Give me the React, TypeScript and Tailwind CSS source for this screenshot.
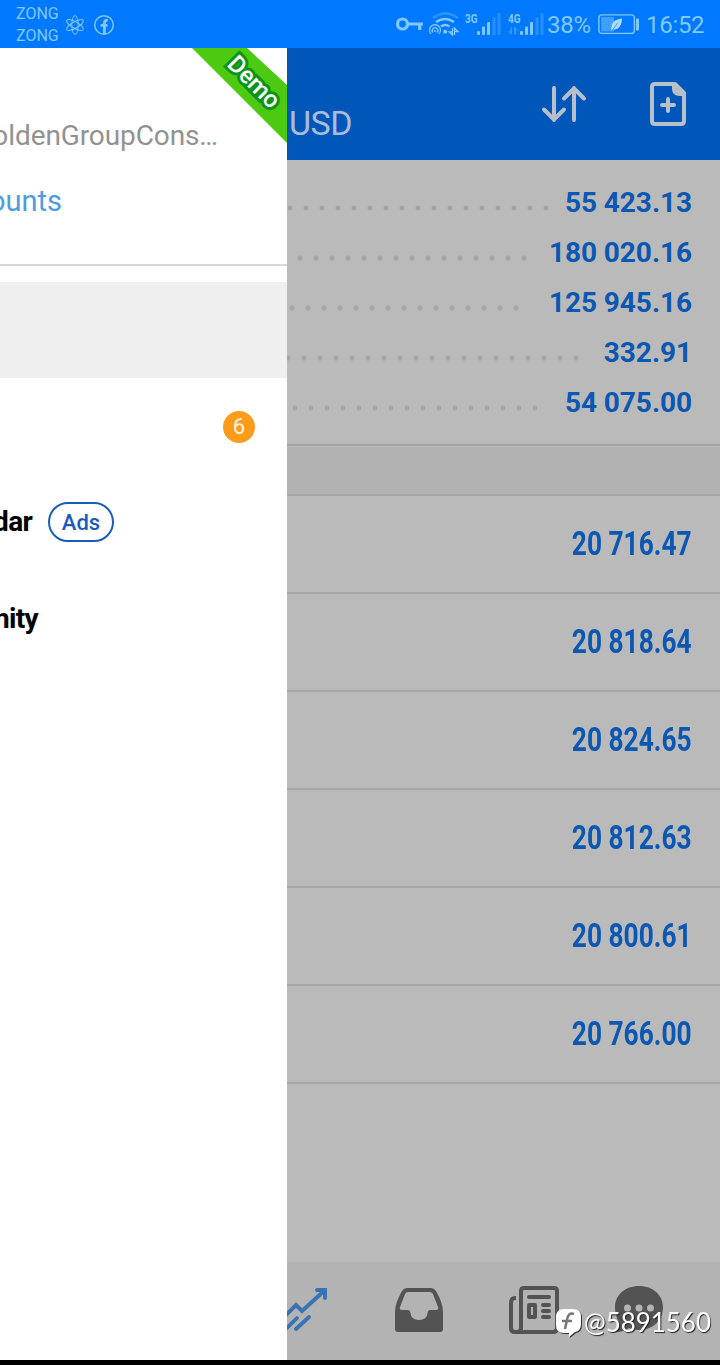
const summary = [
  { value: "55 423.13", dots: "w-[267px]" },
  { value: "180 020.16", dots: "w-[245px]" },
  { value: "125 945.16", dots: "w-[237px]" },
  { value: "332.91", dots: "w-[297px]" },
  { value: "54 075.00", dots: "w-[256px]" },
];

const prices = ["20 716.47", "20 818.64", "20 824.65", "20 812.63", "20 800.61", "20 766.00"];

function Signal({ label, arrows }: { label: string; arrows?: boolean }) {
  return (
    <svg className="h-[48px] w-[36px]" viewBox="0 0 36 48" fill="#80c8ff">
      <text x="0" y="23" fontSize="13" fontWeight="700" textLength="12.5" lengthAdjust="spacingAndGlyphs" fontFamily="Roboto">
        {label}
      </text>
      {arrows && <path opacity=".4" d="M3 27v8l-3-3.500h2zM7 27l3 3.500h-2v4h-1.500zM3 27h1v7h-1zM6 27h1v7h-1z" />}
      <rect x="12" y="31" width="3" height="4" rx="1" />
      <rect x="17" y="26.500" width="3" height="8.500" rx="1" />
      <rect x="22" y="22" width="3" height="13" rx="1" />
      <rect x="27.500" y="17.500" width="3" height="17.500" rx="1" opacity=".3" />
      <rect x="32.500" y="13" width="3" height="22" rx="1" opacity=".3" />
    </svg>
  );
}

function StatusBar() {
  return (
    <header className="flex h-[48px] items-center bg-[#0079ff] text-[#80c8ff]">
      <div className="ml-[16px] mt-px w-[49px] text-[16px] leading-[22px]">
        <div>ZONG</div>
        <div>ZONG</div>
      </div>
      <svg className="mt-[2px] h-[22px] w-[20px]" viewBox="0 0 20 22" fill="none" stroke="#80c8ff" strokeWidth="1">
        <ellipse cx="10" cy="11" rx="3.200" ry="9.500" />
        <ellipse cx="10" cy="11" rx="3.200" ry="9.500" transform="rotate(60 10 11)" />
        <ellipse cx="10" cy="11" rx="3.200" ry="9.500" transform="rotate(120 10 11)" />
      </svg>
      <svg className="ml-[8px] mt-[2px] h-[22px] w-[22px]" viewBox="0 0 22 22" fill="none" stroke="#80c8ff">
        <circle cx="11" cy="11" r="9.300" strokeWidth="1.500" />
        <path d="M11.400 20V8.800Q11.400 6 14.800 6.300M7.500 11.300H14.500" strokeWidth="2.800" />
      </svg>
      <svg className="ml-[280px] h-[48px] w-[30px]" viewBox="0 0 30 48" fill="none" stroke="#80c8ff">
        <circle cx="7.500" cy="24" r="5" strokeWidth="3.200" />
        <path d="M13 24H28M24.700 24V30" strokeWidth="3.200" />
      </svg>
      <svg className="ml-[3px] h-[48px] w-[32px]" viewBox="0 0 32 48" fill="none" stroke="#80c8ff" strokeWidth="2">
        <path opacity=".35" d="M5 18Q17 9 30 18" strokeWidth="2.500" />
        <path d="M8 22Q17 16 26 22M13 26.500Q17 23.500 21.500 26.500" strokeWidth="2.500" />
        <circle cx="17.200" cy="31.800" r="2" fill="#80c8ff" stroke="none" />
        <path d="M3 34A5.500 5.500 0 1 1 11 34M5 32.500A2.800 2.800 0 1 1 9 32.500" strokeWidth="1.300" />
        <circle cx="7" cy="31" r="1" fill="#80c8ff" stroke="none" />
        <path d="M24.500 28V35L21 31.800H24M26.500 35V28L30 31.500H27" strokeWidth="1.300" />
      </svg>
      <div className="ml-[5px] flex">
        <Signal label="3G" />
      </div>
      <div className="ml-[7px] flex">
        <Signal label="4G" arrows />
      </div>
      <span className="ml-[3px] mt-[2px] w-[51px] text-[24px] tracking-[-0.3px]">38%</span>
      <svg className="h-[24px] w-[42px]" viewBox="0 0 42 24" fill="none">
        <rect x="0.900" y="2.900" width="35.500" height="18.500" rx="3" stroke="#80c8ff" strokeWidth="1.400" />
        <rect x="3" y="5" width="13" height="14.500" fill="#3f9eff" />
        <path d="M13.500 19C12 10 18 7 24 6.500C24 13 21 18 15 17.500L13.500 19Z" fill="#a8dcff" />
        <path d="M14 18.500L20 10.500" stroke="#3093ff" strokeWidth=".8" />
        <rect x="38" y="6.500" width="3" height="12" rx="1" fill="#80c8ff" />
      </svg>
      <span className="ml-[6px] mt-[2px] text-[24px] tracking-[-0.3px]">16:52</span>
    </header>
  );
}

function Drawer() {
  return (
    <aside className="relative h-[1312px] w-[287px] flex-none overflow-hidden bg-white">
      <div className="flex h-[218px] flex-col border-b-2 border-[#d7d7d7]">
        <div className="mt-[71px] flex h-[34px] w-[218px] items-center justify-end whitespace-nowrap text-[28px] tracking-[-0.1px] text-[#929292]">
          oldenGroupCons…
        </div>
        <div className="mt-[31px] flex h-[36px] w-[62px] items-center justify-end whitespace-nowrap text-[29px] text-[#4d9de0]">
          ounts
        </div>
      </div>
      <div className="mt-[16px] h-[96px] bg-[#efefef]" />
      <div className="flex h-[97px] items-center justify-end pr-[32px]">
        <div className="flex h-[32px] w-[32px] items-center justify-center rounded-full bg-[#fd9c1c] text-[22px] leading-none text-[#fff5e0]">
          6
        </div>
      </div>
      <div className="flex h-[94px] items-center gap-[16px]">
        <div className="flex w-[32px] justify-end text-[28px] font-bold tracking-[-0.7px] text-black">dar</div>
        <div className="flex h-[40px] w-[66px] items-center justify-center rounded-full border-2 border-[#1a5cbb] text-[22px] font-medium text-[#1a5cbb]">
          Ads
        </div>
      </div>
      <div className="flex h-[100px] w-[38px] items-center justify-end text-[28px] font-bold tracking-[-0.7px] text-black">
        nity
      </div>
      <div className="absolute right-0 top-0 h-[95px] w-[95px] bg-[#4cc911] [clip-path:polygon(0_0,55px_0,95px_37px,95px_95px)]">
        <span className="absolute left-[30px] top-[20px] flex h-[28px] w-[64px] rotate-45 items-center justify-center text-[24px] font-medium text-white [-webkit-text-stroke:6px_#0c9418] [paint-order:stroke_fill]">
          Demo
        </span>
      </div>
    </aside>
  );
}

function TopBar() {
  return (
    <div className="flex h-[112px] bg-[#0057b9] text-[#a9bdda]">
      <span className="ml-[2px] mt-[54px] w-[251px] text-[34px] leading-[42px] tracking-[-0.5px]">USD</span>
      <svg className="mt-[36px] h-[40px] w-[48px]" viewBox="0 0 48 40" fill="none" stroke="#b8bfc8" strokeWidth="4" strokeLinecap="round" strokeLinejoin="round">
        <path d="M14 4V36M4 25.500L14 35.500L24 25.500M34 36V4M24 14.500L34 4.500L44 14.500" />
      </svg>
      <svg className="ml-[62px] mt-[32px] h-[48px] w-[36px]" viewBox="0 0 36 48" fill="none" stroke="#b8bfc8" strokeWidth="4" strokeLinejoin="round">
        <path d="M5 4H25L34 13V41Q34 44 31 44H5Q2 44 2 41V7Q2 4 5 4Z" />
        <path d="M22 3H25L35 13V16H29Q22 15 22 9Z" fill="#b8bfc8" stroke="none" />
        <path d="M18 19V31M12 25H24" strokeLinecap="round" />
      </svg>
    </div>
  );
}

function BottomBar() {
  return (
    <nav className="flex h-[98px] bg-[#b3b3b3]">
      <svg className="mt-[22px] h-[54px] w-[46px]" viewBox="0 0 46 54" fill="none" stroke="#3973b4" strokeWidth="4">
        <path d="M-2 32L9 21L15 27L37 7" />
        <path d="M30 6H38V14" strokeWidth="4" strokeLinecap="round" />
        <path d="M0 44L10 34M9 45L22 33" strokeLinecap="round" strokeWidth="3.800" />
      </svg>
      <svg className="ml-[62px] mt-[26px] h-[44px] w-[48px]" viewBox="0 0 48 44">
        <path fill="#535353" fillRule="evenodd" d="M12 0H36Q39 0 41 3Q48 15 48 24V41Q48 44 45 44H3Q0 44 0 41V24Q0 15 7 3Q9 0 12 0ZM13 4Q11 4 10 6L5 19Q4 22 7 22H13Q15 22 15.500 25Q16 32 24 32Q32 32 32.500 25Q33 22 35 22H41Q44 22 43 19L38 6Q37 4 35 4Z" />
      </svg>
      <svg className="ml-[66px] mt-[24px] h-[48px] w-[50px]" viewBox="0 0 50 48" fill="none" stroke="#535353" strokeWidth="4">
        <path d="M7 12H6Q2 12 2 17V42Q2 46 6 46H44Q48 46 48 42V5Q48 2 45 2H15Q12 2 12 5V42Q12 46 8 46" strokeLinejoin="round" />
        <path d="M20 11H40M34 19H40M34 25H40M34 31H40" strokeLinecap="round" />
        <rect x="20" y="19" width="6" height="12" strokeLinejoin="round" />
      </svg>
      <svg className="ml-[55px] mt-[24px] h-[50px] w-[50px]" viewBox="0 0 50 50" fill="#535353">
        <path d="M25 0C39 0 49 9 49 21.500C49 34 39 44 25 44Q19 44 15 42Q10 46 2 46Q6 41 5 36Q1 30 1 21.500C1 9 11 0 25 0Z" />
        <g fill="#b3b3b3"><circle cx="13.500" cy="22" r="3.500" /><circle cx="25" cy="22" r="3.500" /><circle cx="36.500" cy="22" r="3.500" /></g>
      </svg>
    </nav>
  );
}

export default function App() {
  return (
    <div className="relative h-[1365px] w-[720px] overflow-hidden bg-black font-['Roboto',sans-serif]">
      <StatusBar />
      <div className="flex">
        <Drawer />
        <main className="flex h-[1312px] w-[433px] flex-none flex-col overflow-hidden bg-[#bababa]">
          <TopBar />
          <section className="h-[286px] flex-none border-b-2 border-[#a6a6a6] pt-[18px] text-[#0b57b1]">
            {summary.map((row) => (
              <div key={row.value} className="flex h-[50px] items-center pr-[28px]">
                <div className={`mt-[9px] h-[6px] flex-none bg-[radial-gradient(circle,#a5a5a5_2px,transparent_3px)] bg-[length:16px_6px] bg-right ${row.dots}`} />
                <span className="ml-auto whitespace-nowrap text-[28px] font-bold tracking-[-0.05px]">{row.value}</span>
              </div>
            ))}
          </section>
          <div className="h-[50px] flex-none border-b-2 border-t border-b-[#a6a6a6] border-t-[#bababa] bg-[#b2b2b2]" />
          {prices.map((price) => (
            <div key={price} className="flex h-[98px] flex-none items-center justify-end border-b-2 border-[#a6a6a6] pr-[28px]">
              <span className="origin-right scale-x-[0.785] whitespace-nowrap text-[33.5px] font-bold text-[#0b57b1]">{price}</span>
            </div>
          ))}
          <div className="mt-auto">
            <BottomBar />
          </div>
        </main>
      </div>
      <div className="absolute left-[556px] top-[1305px] flex items-center">
        <svg className="mt-px h-[32px] w-[28px] drop-shadow-[1px_1px_0_#333]" viewBox="0 0 28 32">
          <path fill="white" d="M8 3H17Q25 3 25 11V18Q25 25 19 26L13 31V27H8Q0 27 0 19V11Q0 3 8 3Z" />
          <path d="M18 8Q12 6 11 14L9 23M6 15H16" fill="none" stroke="#777" strokeWidth="2.500" />
        </svg>
        <span className="origin-left scale-x-[0.96] whitespace-nowrap font-['Lato',sans-serif] text-[27px] leading-[32px] text-white [text-shadow:1px_1px_1px_#222]">@5891560</span>
      </div>
    </div>
  );
}
